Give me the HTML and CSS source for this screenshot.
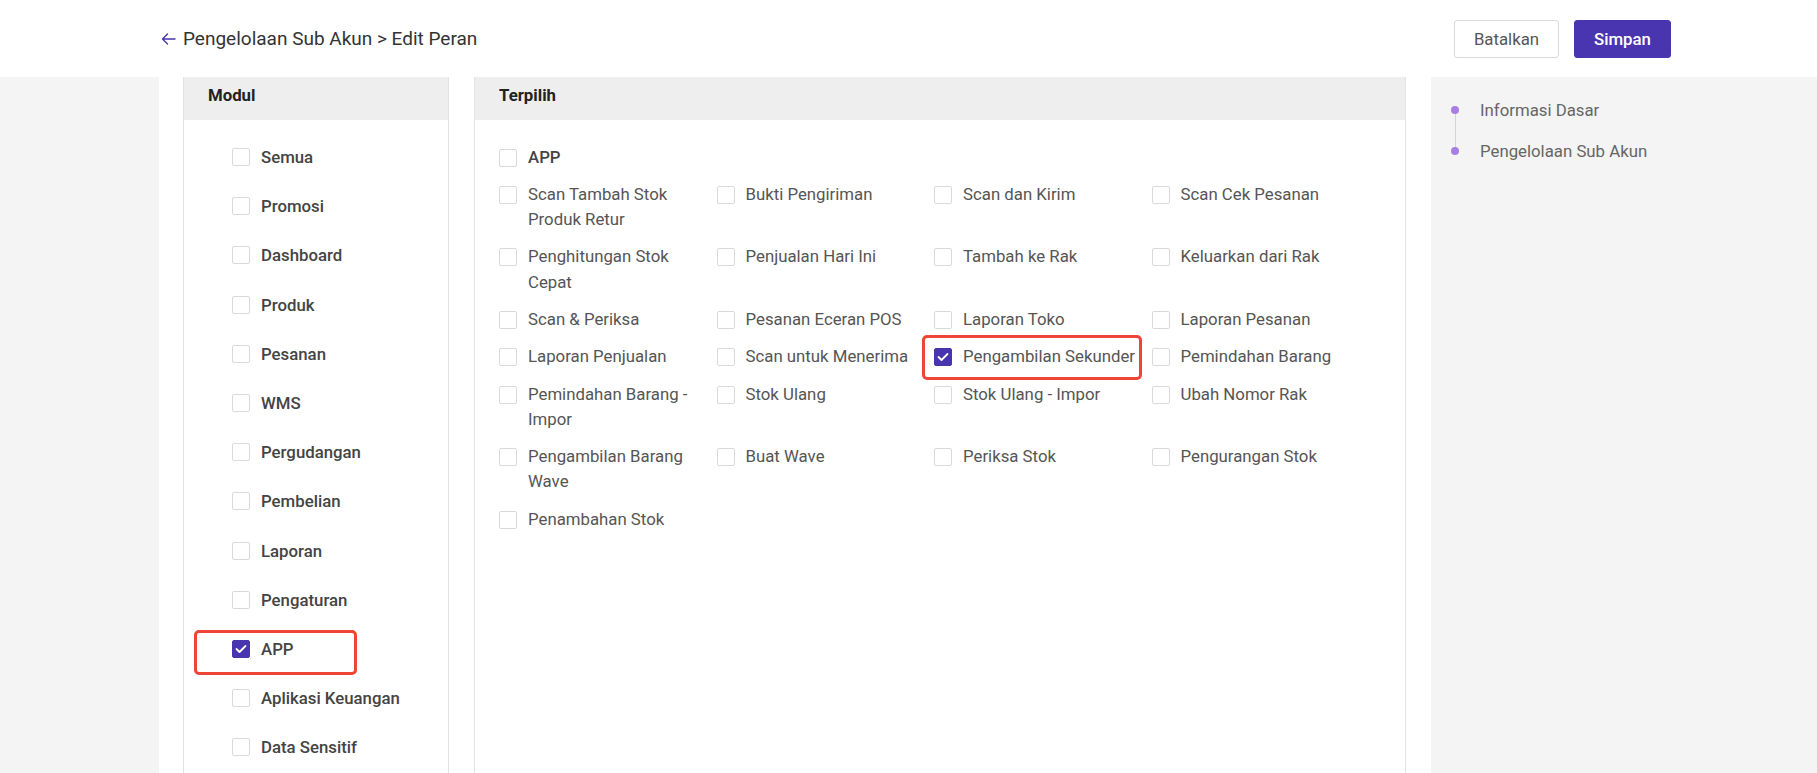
FILE: index.html
```html
<!DOCTYPE html>
<html lang="id">
<head>
<meta charset="utf-8">
<title>Edit Peran</title>
<link rel="stylesheet" href="styles.css">
</head>
<body>
<header class="topbar">
  <div class="crumb">
    <svg class="back" width="15" height="12" viewBox="0 0 15 12"><path d="M14 6H1.5M6.5 1L1.5 6l5 5" fill="none" stroke="#4a35b0" stroke-width="1.4" stroke-linecap="round" stroke-linejoin="round"/></svg>
    <span>Pengelolaan Sub Akun &gt; Edit Peran</span>
  </div>
  <div class="actions">
    <button class="btn btn-cancel">Batalkan</button>
    <button class="btn btn-save">Simpan</button>
  </div>
</header>
<div class="page">
  <main class="content">
    <section class="panel modul">
      <div class="panel-head">Modul</div>
      <ul class="modul-list">
        <li class="mitem"><span class="cb"></span>Semua</li>
        <li class="mitem"><span class="cb"></span>Promosi</li>
        <li class="mitem"><span class="cb"></span>Dashboard</li>
        <li class="mitem"><span class="cb"></span>Produk</li>
        <li class="mitem"><span class="cb"></span>Pesanan</li>
        <li class="mitem"><span class="cb"></span>WMS</li>
        <li class="mitem"><span class="cb"></span>Pergudangan</li>
        <li class="mitem"><span class="cb"></span>Pembelian</li>
        <li class="mitem"><span class="cb"></span>Laporan</li>
        <li class="mitem"><span class="cb"></span>Pengaturan</li>
        <li class="mitem hl-app"><span class="cb on"><svg width="12" height="10" viewBox="0 0 12 10"><path d="M1.5 5l3 3L10.5 2" fill="none" stroke="#fff" stroke-width="1.8" stroke-linecap="round" stroke-linejoin="round"/></svg></span>APP<span class="mark mark-app"></span></li>
        <li class="mitem"><span class="cb"></span>Aplikasi Keuangan</li>
        <li class="mitem"><span class="cb"></span>Data Sensitif</li>
      </ul>
    </section>
    <section class="panel picked">
      <div class="panel-head">Terpilih</div>
      <div class="picked-body">
        <div class="gitem group"><span class="cb"></span><span class="lbl">APP</span></div>
        <div class="grid">
          <div class="gitem"><span class="cb"></span><span class="lbl">Scan Tambah Stok Produk Retur</span></div>
          <div class="gitem"><span class="cb"></span><span class="lbl">Bukti Pengiriman</span></div>
          <div class="gitem"><span class="cb"></span><span class="lbl">Scan dan Kirim</span></div>
          <div class="gitem"><span class="cb"></span><span class="lbl">Scan Cek Pesanan</span></div>
          <div class="gitem"><span class="cb"></span><span class="lbl">Penghitungan Stok Cepat</span></div>
          <div class="gitem"><span class="cb"></span><span class="lbl">Penjualan Hari Ini</span></div>
          <div class="gitem"><span class="cb"></span><span class="lbl">Tambah ke Rak</span></div>
          <div class="gitem"><span class="cb"></span><span class="lbl">Keluarkan dari Rak</span></div>
          <div class="gitem"><span class="cb"></span><span class="lbl">Scan &amp; Periksa</span></div>
          <div class="gitem"><span class="cb"></span><span class="lbl">Pesanan Eceran POS</span></div>
          <div class="gitem"><span class="cb"></span><span class="lbl">Laporan Toko</span></div>
          <div class="gitem"><span class="cb"></span><span class="lbl">Laporan Pesanan</span></div>
          <div class="gitem"><span class="cb"></span><span class="lbl">Laporan Penjualan</span></div>
          <div class="gitem"><span class="cb"></span><span class="lbl">Scan untuk Menerima</span></div>
          <div class="gitem"><span class="cb on"><svg width="12" height="10" viewBox="0 0 12 10"><path d="M1.5 5l3 3L10.5 2" fill="none" stroke="#fff" stroke-width="1.8" stroke-linecap="round" stroke-linejoin="round"/></svg></span><span class="lbl">Pengambilan Sekunder</span><span class="mark mark-sek"></span></div>
          <div class="gitem"><span class="cb"></span><span class="lbl">Pemindahan Barang</span></div>
          <div class="gitem"><span class="cb"></span><span class="lbl">Pemindahan Barang - Impor</span></div>
          <div class="gitem"><span class="cb"></span><span class="lbl">Stok Ulang</span></div>
          <div class="gitem"><span class="cb"></span><span class="lbl">Stok Ulang - Impor</span></div>
          <div class="gitem"><span class="cb"></span><span class="lbl">Ubah Nomor Rak</span></div>
          <div class="gitem"><span class="cb"></span><span class="lbl">Pengambilan Barang Wave</span></div>
          <div class="gitem"><span class="cb"></span><span class="lbl">Buat Wave</span></div>
          <div class="gitem"><span class="cb"></span><span class="lbl">Periksa Stok</span></div>
          <div class="gitem"><span class="cb"></span><span class="lbl">Pengurangan Stok</span></div>
          <div class="gitem"><span class="cb"></span><span class="lbl">Penambahan Stok</span></div>
        </div>
      </div>
    </section>
  </main>
  <nav class="anchor">
    <div class="anc-item"><span class="dot"></span>Informasi Dasar</div>
    <div class="anc-item"><span class="dot"></span>Pengelolaan Sub Akun</div>
  </nav>
</div>
</body>
</html>
```

FILE: styles.css
```css
* { box-sizing: border-box; }
html, body { margin: 0; padding: 0; }
body {
  background: #f4f4f4;
  font-family: Roboto, "Liberation Sans", Arial, sans-serif;
  color: #333;
  height: 773px;
  overflow: hidden;
}
.topbar {
  height: 77px;
  background: #fff;
  display: flex;
  align-items: center;
  justify-content: space-between;
  padding: 0 146px 0 161px;
}
.crumb {
  display: flex;
  align-items: center;
  gap: 7px;
  font-size: 19px;
  color: #333;
}
.back { display: block; }
.actions { display: flex; gap: 15px; }
.btn {
  height: 38px;
  font-family: inherit;
  font-size: 16.8px;
  border-radius: 3px;
  cursor: pointer;
  padding: 0;
}
.btn-cancel {
  width: 105px;
  background: #fff;
  border: 1px solid #d9d9d9;
  color: #555;
}
.btn-save {
  width: 97px;
  background: #4a35b0;
  border: 1px solid #4a35b0;
  color: #fff;
  font-weight: 500;
}
.page {
  display: flex;
  padding-left: 159px;
  height: 696px;
}
.content {
  width: 1272px;
  background: #fff;
  display: flex;
  gap: 25px;
  padding: 0 25px 0 24px;
}
.panel {
  border-left: 1px solid #e3e3e3;
  border-right: 1px solid #e3e3e3;
}
.panel-head {
  height: 43px;
  background: #eeeeee;
  padding: 8px 0 0 24px;
  line-height: 20px;
  font-size: 16.8px;
  font-weight: 700;
  color: #222;
}
.modul { width: 266px; }
.picked { width: 932px; }
.modul-list {
  list-style: none;
  margin: 0;
  padding: 25px 0 0 48px;
}
.mitem {
  position: relative;
  display: flex;
  align-items: center;
  height: 24px;
  margin-bottom: 25.2px;
  font-size: 16.8px;
  font-weight: 500;
  color: #444;
}
.cb {
  flex: none;
  width: 18px;
  height: 18px;
  border: 1px solid #d9d9d9;
  border-radius: 2px;
  background: #fff;
  margin-right: 11px;
  display: flex;
  align-items: center;
  justify-content: center;
}
.cb.on {
  background: #4a35b0;
  border-color: #4a35b0;
}
.picked-body {
  padding: 24.5px 36px 0 24px;
}
.gitem {
  position: relative;
  display: flex;
  align-items: flex-start;
  font-size: 16.8px;
  line-height: 25.2px;
  color: #555;
  padding-right: 8px;
}
.gitem .cb { margin-top: 4px; }
.group { margin-bottom: 12px; }
.group .lbl { font-weight: 500; color: #444; }
.grid {
  display: grid;
  grid-template-columns: repeat(4, 1fr);
  row-gap: 12.2px;
}
.mark {
  position: absolute;
  border: 3px solid #ef4438;
  border-radius: 5px;
  pointer-events: none;
}
.mark-app { left: -38px; top: -7px; width: 163px; height: 45px; }
.mark-sek { left: -12px; top: -9px; width: 220px; height: 45px; }
.anchor {
  padding: 20px 0 0 20px;
  display: flex;
  flex-direction: column;
  gap: 16px;
  position: relative;
}
.anc-item {
  position: relative;
  display: flex;
  align-items: center;
  height: 25px;
  font-size: 16.8px;
  color: #666;
}
.dot {
  width: 8px;
  height: 8px;
  border-radius: 50%;
  background: #a67fe0;
  margin-right: 21px;
  position: relative;
  z-index: 1;
}
.anc-item:first-child::after {
  content: "";
  position: absolute;
  left: 3.5px;
  top: 12px;
  height: 41px;
  width: 1px;
  background: #d4d4d4;
}
```
